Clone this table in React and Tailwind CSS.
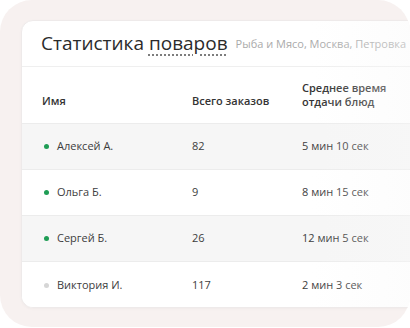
const cooks = [
  { name: 'Алексей А.', orders: 82, time: '5 мин 10 сек', online: true },
  { name: 'Ольга Б.', orders: 9, time: '8 мин 15 сек', online: true },
  { name: 'Сергей Б.', orders: 26, time: '12 мин 5 сек', online: true },
  { name: 'Виктория И.', orders: 117, time: '2 мин 3 сек', online: false },
]

export default function App() {
  return (
    <div className="w-[410px] h-[328px] bg-white overflow-hidden" style={{ fontFamily: '"Open Sans", "Noto Sans", sans-serif' }}>
      <div className="w-[410px] h-[327px] rounded-[32px] bg-[#f7f1f0] pt-[20px] pl-[21px] overflow-hidden">
        <div className="relative w-[440px] h-[288px] bg-white rounded-[12px] border border-[#eeeaea] overflow-hidden shadow-[0_1px_3px_rgba(0,0,0,0.03)]">
          <div className="h-[46px] flex items-center gap-[8px] pl-[19px] border-b border-[#efefef] whitespace-nowrap">
            <h1 className="text-[19px] text-[#2b2b2b] leading-none">
              Статистика{' '}
              <span className="underline decoration-dotted decoration-[#777] underline-offset-[5px]">поваров</span>
            </h1>
            <span className="text-[11px] text-[#aaa] mt-[2px]">Рыба и Мясо, Москва, Петровка</span>
          </div>
          <div className="h-[57px] flex items-center text-[11px] font-semibold text-[#333] border-b border-[#ececec] leading-[14px]">
            <div className="w-[170px] pl-[20px] pt-[11px]">Имя</div>
            <div className="w-[110px] pt-[11px]">Всего заказов</div>
            <div className="flex-1">Среднее время<br />отдачи блюд</div>
          </div>
          {cooks.map((c, i) => (
            <div
              key={c.name}
              className={`h-[46px] flex items-center text-[11px] text-[#3d3d3d] ${i % 2 === 0 ? 'bg-[#f6f6f6]' : 'bg-white'} ${i < cooks.length - 1 ? 'border-b border-[#ececec]' : ''}`}
            >
              <div className="w-[170px] pl-[22px] flex items-center gap-[8px]">
                <span className={`w-[5px] h-[5px] rounded-full ${c.online ? 'bg-[#1f9d55]' : 'bg-[#d6d6d6]'}`} />
                {c.name}
              </div>
              <div className="w-[110px]">{c.orders}</div>
              <div className="flex-1">{c.time}</div>
            </div>
          ))}
          <div className="absolute top-0 left-[290px] h-full w-[150px] bg-gradient-to-r from-transparent to-[#f8f8f8]/60 pointer-events-none" />
        </div>
      </div>
    </div>
  )
}
